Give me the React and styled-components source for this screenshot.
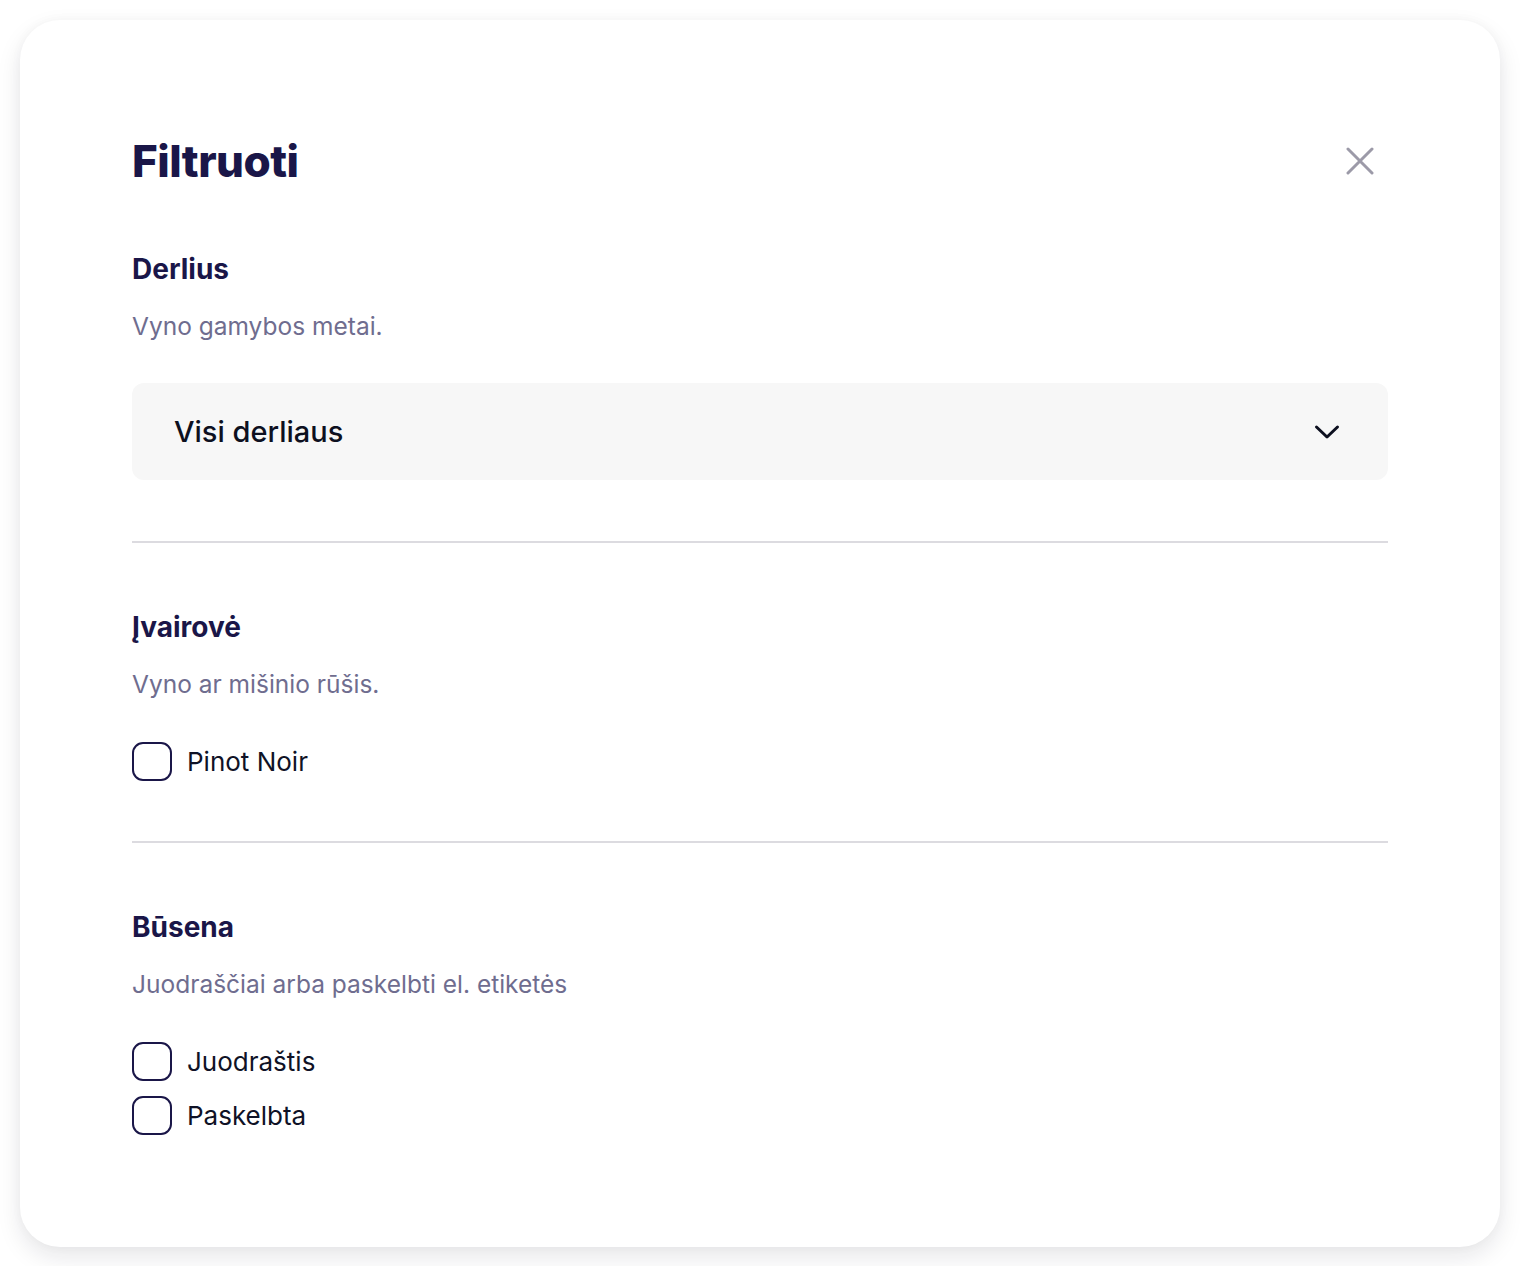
import * as React from 'react';
import styled, { createGlobalStyle } from 'styled-components';

const GlobalStyle = createGlobalStyle`
  html, body {
    margin: 0;
    padding: 0;
    background: #ffffff;
  }
  body {
    font-family: Inter, "Noto Sans", sans-serif;
    -webkit-font-smoothing: antialiased;
  }
`;

const sections = [
  {
    title: 'Derlius',
    hint: 'Vyno gamybos metai.',
    type: 'select',
    value: 'Visi derliaus',
  },
  {
    title: 'Įvairovė',
    hint: 'Vyno ar mišinio rūšis.',
    type: 'checks',
    options: ['Pinot Noir'],
  },
  {
    title: 'Būsena',
    hint: 'Juodraščiai arba paskelbti el. etiketės',
    type: 'checks',
    options: ['Juodraštis', 'Paskelbta'],
  },
];

export default function App() {
  return (
    <>
      <GlobalStyle />
      <Page>
        <Card>
          <Header>
            <Title>Filtruoti</Title>
            <CloseButton aria-label="Uždaryti">
              <svg width="28" height="28" viewBox="0 0 28 28" fill="none">
                <path d="M2 2L26 26M26 2L2 26" stroke="#9c9aa8" strokeWidth="3" strokeLinecap="round" />
              </svg>
            </CloseButton>
          </Header>

          {sections.map((section, i) => (
            <Section key={section.title} $first={i === 0} $last={i === sections.length - 1}>
              <SectionTitle>{section.title}</SectionTitle>
              <Hint>{section.hint}</Hint>
              {section.type === 'select' ? (
                <Select>
                  <span>{section.value}</span>
                  <svg width="26" height="16" viewBox="0 0 26 16" fill="none">
                    <path d="M2.5 3L13 13L23.5 3" stroke="#0d1020" strokeWidth="3" strokeLinecap="round" strokeLinejoin="round" />
                  </svg>
                </Select>
              ) : (
                <Options>
                  {section.options.map((option) => (
                    <CheckRow key={option}>
                      <Box />
                      <span>{option}</span>
                    </CheckRow>
                  ))}
                </Options>
              )}
            </Section>
          ))}
        </Card>
      </Page>
    </>
  );
}

const Page = styled.div`
  padding: 20px;
`;

const Card = styled.div`
  box-sizing: border-box;
  width: 1480px;
  min-height: 1226px;
  padding: 112px;
  background: #ffffff;
  border-radius: 40px;
  box-shadow: 0 10px 24px rgba(20, 20, 40, 0.1), 0 0 12px rgba(20, 20, 40, 0.03);
  display: flex;
  flex-direction: column;
`;

const Header = styled.div`
  display: flex;
  align-items: center;
  justify-content: space-between;
  height: 58px;
`;

const Title = styled.h1`
  margin: 0;
  font-size: 44px;
  line-height: 58px;
  font-weight: 800;
  color: #1a1648;
  letter-spacing: -0.5px;
`;

const CloseButton = styled.button`
  border: none;
  background: transparent;
  padding: 0;
  margin-right: 14px;
  width: 28px;
  height: 28px;
  display: flex;
  align-items: center;
  justify-content: center;
  cursor: pointer;
`;

const Section = styled.section`
  display: flex;
  flex-direction: column;
  padding: ${(p) => (p.$first ? '61px' : '66px')} 0 ${(p) => (p.$last ? '0' : p.$first ? '61px' : '60px')};
  border-bottom: ${(p) => (p.$last ? 'none' : '2px solid #dcdbe0')};
`;

const SectionTitle = styled.h2`
  margin: 0;
  font-size: 28px;
  line-height: 36px;
  font-weight: 700;
  color: #1a1648;
`;

const Hint = styled.p`
  margin: 23px 0 0;
  font-size: 24.5px;
  line-height: 32px;
  font-weight: 400;
  color: #6f6d8f;
`;

const Select = styled.div`
  margin-top: 41px;
  height: 97px;
  box-sizing: border-box;
  padding: 0 48px 0 42px;
  background: #f7f7f7;
  border-radius: 12px;
  display: flex;
  align-items: center;
  justify-content: space-between;
  font-size: 29px;
  font-weight: 500;
  color: #0d1020;
  cursor: pointer;
`;

const Options = styled.div`
  margin-top: 41px;
  display: flex;
  flex-direction: column;
  gap: 14px;
`;

const CheckRow = styled.label`
  display: flex;
  align-items: center;
  gap: 15px;
  height: 40px;
  font-size: 26px;
  font-weight: 400;
  color: #0f1226;
  cursor: pointer;
`;

const Box = styled.span`
  box-sizing: border-box;
  width: 40px;
  height: 39px;
  border: 2.5px solid #1a1648;
  border-radius: 11px;
  flex-shrink: 0;
`;
